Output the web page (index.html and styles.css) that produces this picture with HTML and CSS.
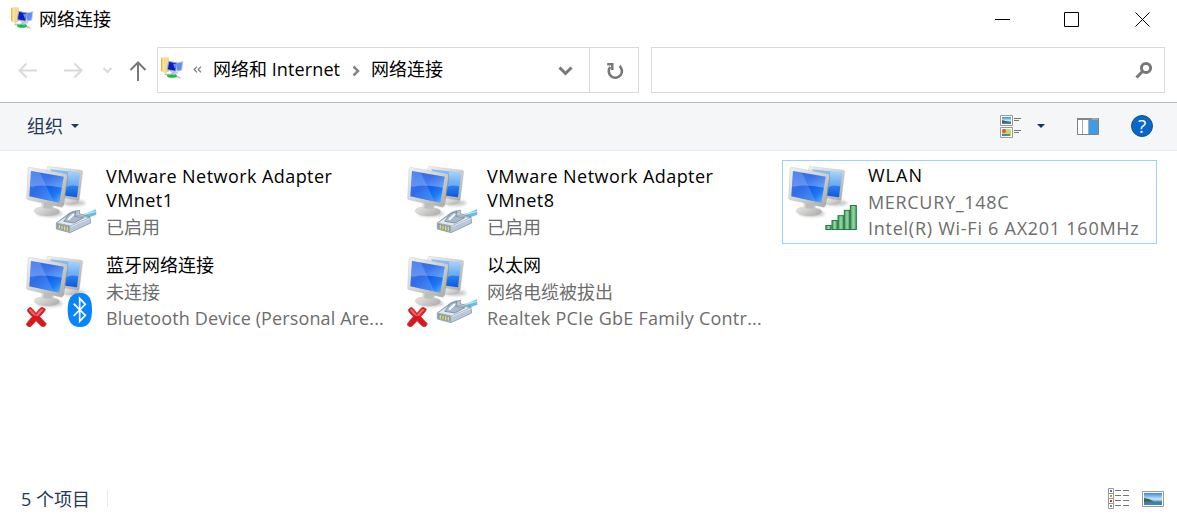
FILE: index.html
```html
<!DOCTYPE html>
<html lang="zh-CN">
<head>
<meta charset="utf-8">
<title>网络连接</title>
<link rel="stylesheet" href="styles.css">
</head>
<body>
<svg class="defs" width="0" height="0">
  <defs>
    <linearGradient id="screen" x1="0" y1="0" x2="1" y2="1">
      <stop offset="0" stop-color="#1565ee"/><stop offset=".4" stop-color="#0a50e4"/><stop offset=".75" stop-color="#1e78f4"/><stop offset="1" stop-color="#6cc0fc"/>
    </linearGradient>
    <linearGradient id="screenBack" x1="0" y1="0" x2="0" y2="1">
      <stop offset="0" stop-color="#8ecbff"/><stop offset=".45" stop-color="#3490f6"/><stop offset="1" stop-color="#0c58dc"/>
    </linearGradient>
    <linearGradient id="shine" x1="0" y1="0" x2=".5" y2="1">
      <stop offset="0" stop-color="#fff" stop-opacity=".08"/><stop offset="1" stop-color="#fff" stop-opacity=".3"/>
    </linearGradient>
    <linearGradient id="metal" x1="0" y1="0" x2="1" y2="1">
      <stop offset="0" stop-color="#f2f2f0"/><stop offset=".5" stop-color="#d2d2d0"/><stop offset="1" stop-color="#a6a6a4"/>
    </linearGradient>
    <linearGradient id="bar" x1="0" y1="0" x2="1" y2="0">
      <stop offset="0" stop-color="#3f9a5e"/><stop offset=".5" stop-color="#9bd6a8"/><stop offset="1" stop-color="#4aa267"/>
    </linearGradient>
    <linearGradient id="folder" x1="0" y1="0" x2="1" y2="0">
      <stop offset="0" stop-color="#d9ad45"/><stop offset=".3" stop-color="#fbe9a4"/><stop offset="1" stop-color="#e3bf5a"/>
    </linearGradient>
    <linearGradient id="sky" x1="0" y1="0" x2="0" y2="1">
      <stop offset="0" stop-color="#3e86dc"/><stop offset=".5" stop-color="#c4e4fa"/><stop offset=".6" stop-color="#a5cfe4"/><stop offset=".75" stop-color="#3f8090"/><stop offset="1" stop-color="#3a87c4"/>
    </linearGradient>
    <filter id="soft" x="-30%" y="-50%" width="160%" height="200%"><feGaussianBlur stdDeviation="4"/></filter>

    <symbol id="monitors" viewBox="30 30 216 216">
      <ellipse cx="175" cy="144" rx="34" ry="9" fill="#777" opacity=".4" filter="url(#soft)"/>
      <ellipse cx="102" cy="176" rx="38" ry="9" fill="#777" opacity=".4" filter="url(#soft)"/>
      <path d="M145 132L186 128Q195 140 180 146Q163 152 141 147z" fill="url(#metal)"/>
      <path d="M95 34L197 46Q201 47 200 52L190 133Q189 137 184 136L146 130L90 48z" fill="url(#metal)" stroke="#bcbcba"/>
      <path d="M102 42L192 53L183 127L148 122z" fill="url(#screenBack)"/>
      <path d="M156 50L192 53L187 94Q168 88 153 95z" fill="#fff" opacity=".32"/>
      <path d="M77 137L113 145L112 158Q137 163 130 174Q119 184 89 183Q57 180 54 168Q56 157 77 156z" fill="url(#metal)" stroke="#c2c2c0"/>
      <path d="M83 141L110 146L107 162L82 160z" fill="#bdbdba"/>
      <path d="M41 37L149 56Q155 57 155 63L141 151Q139 157 133 156L35 134Q31 132 32 128L36 41Q37 37 41 37z" fill="url(#metal)" stroke="#b5b5b3"/>
      <path d="M45 48L143 65L130 143L40 124z" fill="url(#screen)"/>
      <path d="M45 48L72 53L112 138L40 124z" fill="#fff" opacity=".16"/>
      <path d="M45 48L143 65L138 98Q78 87 48 95L42 94z" fill="url(#shine)"/>
      <path d="M153 60L156 63L142 152L136 157" fill="none" stroke="#999997" stroke-width="2"/>
    </symbol>
    <symbol id="plug" viewBox="30 30 216 216">
      <path d="M177 181Q207 179 240 163L241 179Q223 184 207 193z" fill="#63bfdd"/>
      <path d="M190 182L240 169" stroke="#b7eafa" stroke-width="4"/>
      <path d="M121 204L158 176L172 169L191 166L190 176L222 186L224 204L162 233L121 222z" fill="#b9c8d8" stroke="#7388a0" stroke-width="2"/>
      <path d="M121 204L160 178L222 188L164 213z" fill="#dfe9f2" stroke="#8397ad" stroke-width="2"/>
      <path d="M143 199L160 176L180 169L176 184L203 188L174 204z" fill="#a9b9cc" stroke="#66798f" stroke-width="2"/>
      <path d="M156 194L174 177" stroke="#f5fafe" stroke-width="6"/>
      <path d="M124 207L160 215L160 229L124 220z" fill="#929c91" stroke="#657b90"/>
      <path d="M130 210v11M138 212v11M146 214v11M154 216v11" stroke="#e3da70" stroke-width="4"/>
      <path d="M164 215L223 190" stroke="#f4f8fb" stroke-width="2"/>
    </symbol>
    <symbol id="cross" viewBox="30 30 216 216">
      <path d="M34 194L42 187Q46 186 60 205Q73 186 79 187L88 192Q90 196 71 215L91 236Q89 244 81 246Q74 243 60 227Q45 247 39 246L31 240Q29 236 49 215Q33 200 34 194z" fill="#dc171c" stroke="#b9343a" stroke-width="2"/>
      <path d="M38 194L43 191Q48 195 60 210Q73 192 79 191L83 194L66 213Q54 213 49 208z" fill="#f58080" opacity=".75"/>
    </symbol>
    <symbol id="bluetooth" viewBox="30 30 216 216">
      <path d="M192 144C219 144 228 161 228 195S218 246 192 246S155 229 155 195S166 144 192 144z" fill="#0a84fa"/>
      <path d="M173 176L208 211L191 229V160L208 178L173 213" fill="none" stroke="#fff" stroke-width="5"/>
    </symbol>
    <symbol id="signal" viewBox="30 30 216 216">
      <g fill="url(#bar)" stroke="#257b43" stroke-width="3">
        <rect x="143.500" y="211.500" width="16" height="12"/><rect x="162" y="196.500" width="16" height="27"/><rect x="180" y="182" width="17" height="41.500"/><rect x="199" y="166" width="16" height="57.500"/><rect x="217" y="151.500" width="18" height="72"/>
      </g>
    </symbol>
    <symbol id="folderNet" viewBox="0 0 72 72">
      <path d="M3 3L11 0L26 3V43L15 49L3 42z" fill="url(#folder)"/>
      <path d="M11 5L27 1V38L15 47z" fill="#f4dc8c"/>
      <path d="M47 18L69 14L65 40L51 43z" fill="#5f90ec" stroke="#c6cfdd" stroke-width="3"/>
      <path d="M26 13L51 18L47 43L22 38z" fill="#0b1fc0" stroke="#9aabd8" stroke-width="3"/>
      <path d="M39 20L49 20L46 38z" fill="#6b8cf4"/>
      <path d="M30 42L51 44L56 49L38 51z" fill="#bfc3cb"/>
      <path d="M13 52L31 53M47 58L61 63" stroke="#bcc3c9" stroke-width="5"/>
      <ellipse cx="36" cy="56" rx="15" ry="6" fill="#1fb655"/>
      <path d="M25 54Q35 48 45 54" fill="none" stroke="#7be69d" stroke-width="3"/>
    </symbol>
  </defs>
</svg>

<div class="window">
  <header class="titlebar">
    <svg class="app-icon" width="24" height="24"><use href="#folderNet"/></svg>
    <span class="title">网络连接</span>
    <svg class="controls" width="157" height="16" viewBox="0 0 157 16" fill="none" stroke="#000">
      <path d="M0 7.500h15M69.500.500h14v14h-14zM140.500.500l14 14M154.500.500l-14 14"/>
    </svg>
  </header>

  <nav class="navbar">
    <svg class="nav-arrows" width="132" height="24" viewBox="0 0 132 24" fill="none" stroke-width="2">
      <path d="M20 12.500H3M9.500 5.500L2.500 12.500L9.500 19.500M47 12.500H64M57.500 5.500L64.500 12.500L57.500 19.500" stroke="#dadada"/>
      <path d="M86.500 10l4 4 4-4" stroke="#dadada"/>
      <path d="M121 23V5M113.500 12L121 4.500L128.500 12" stroke="#777"/>
    </svg>
    <div class="address">
      <svg class="addr-icon" width="24" height="24"><use href="#folderNet"/></svg>
      <svg class="laquo" width="9" height="7" viewBox="0 0 9 7" fill="none" stroke="#777" stroke-width="1.200"><path d="M4 .7L1.200 3.500L4 6.300M8 .7L5.200 3.500L8 6.300"/></svg>
      <span class="crumb crumb-net">网络和 <span class="latin">Internet</span></span>
      <svg class="crumb-sep" width="8" height="12" viewBox="0 0 8 12" fill="none" stroke="#858585" stroke-width="2.500"><path d="M1.500 1.500L6 6L1.500 10.500"/></svg>
      <span class="crumb">网络连接</span>
      <svg class="addr-chevron" width="15" height="10" viewBox="0 0 15 10" fill="none" stroke="#777" stroke-width="3"><path d="M1.500 1.500L7.500 7.500L13.500 1.500"/></svg>
      <div class="refresh">
        <svg width="18" height="18" viewBox="0 0 18 18" fill="none" stroke="#777" stroke-width="2.600"><path d="M4.200 5A6.600 6.600 0 1 0 13.500 4"/><path d="M1.200 2.300H7.500M6.300 1.200V8" stroke-width="2.400"/></svg>
      </div>
    </div>
    <div class="search">
      <svg width="18" height="18" viewBox="0 0 18 18" fill="none" stroke="#777" stroke-width="3"><circle cx="11" cy="7" r="4.600"/><path d="M7.700 10.300L1.500 16.500"/></svg>
    </div>
  </nav>

  <div class="toolbar">
    <span class="organize">组织</span>
    <svg class="caret" width="8" height="4" viewBox="0 0 8 4"><path d="M0 0h8L4 4z" fill="#1e395b"/></svg>
    <svg class="tool-view" width="22" height="24" viewBox="0 0 22 24">
      <g fill="#fff" stroke="#999"><path d="M.500.500h12v10H.500zM.500 12.500h12v10H.500z"/></g>
      <path d="M2 2h9v7H2z" fill="url(#sky)"/><path d="M2 5l9 2.500H2z" fill="#38674a"/>
      <path d="M2 14h9v7H2z" fill="#b8d98c"/><circle cx="4" cy="16" r="2" fill="#df5a25"/><circle cx="8.500" cy="17" r="1.700" fill="#f2c943"/><path d="M2 19h4v2H2z" fill="#3e83c7"/><path d="M6 19h4v2H6z" fill="#5a9d3d"/>
      <path d="M14 3.500h7M14 5.500h5M14 15.500h7M14 17.500h5" stroke="#777"/>
    </svg>
    <svg class="caret caret-view" width="8" height="4" viewBox="0 0 8 4"><path d="M0 0h8L4 4z" fill="#16305f"/></svg>
    <svg class="tool-pane" width="22" height="17" viewBox="0 0 22 17">
      <path d="M.500.500h21v16H.500z" fill="#fff" stroke="#808080"/><path d="M0 0h22v2H0z" fill="#808786"/><path d="M15.500 1h1M17.500 1h1M19.500 1h1" stroke="#fff"/>
      <path d="M5.500 2v14" stroke="#aaa"/><path d="M12 2h9v14h-9z" fill="#409be2"/><path d="M11.500 2v14" stroke="#8fb5da"/>
    </svg>
    <span class="help">?</span>
  </div>

  <main class="items">
    <div class="item wrapped">
      <svg class="item-icon" width="72" height="72"><use href="#monitors"/><use href="#plug"/></svg>
      <div class="text"><div class="name">VMware Network Adapter<br>VMnet1</div><div class="sub">已启用</div></div>
    </div>
    <div class="item wrapped">
      <svg class="item-icon" width="72" height="72"><use href="#monitors"/><use href="#plug"/></svg>
      <div class="text"><div class="name">VMware Network Adapter<br>VMnet8</div><div class="sub">已启用</div></div>
    </div>
    <div class="item selected">
      <svg class="item-icon" width="72" height="72"><use href="#monitors"/><use href="#signal"/></svg>
      <div class="text"><div class="name wlan">WLAN</div><div class="sub mercury">MERCURY_148C</div><div class="sub intel">Intel(R) Wi-Fi 6 AX201 160MHz</div></div>
    </div>
    <div class="item">
      <svg class="item-icon" width="72" height="72"><use href="#monitors"/><use href="#cross"/><use href="#bluetooth"/></svg>
      <div class="text"><div class="name">蓝牙网络连接</div><div class="sub">未连接</div><div class="sub bt">Bluetooth Device (Personal Are...</div></div>
    </div>
    <div class="item">
      <svg class="item-icon" width="72" height="72"><use href="#monitors"/><use href="#cross"/><use href="#plug"/></svg>
      <div class="text"><div class="name">以太网</div><div class="sub">网络电缆被拔出</div><div class="sub realtek">Realtek PCIe GbE Family Contr...</div></div>
    </div>
  </main>

  <footer class="status">
    <span class="count">5 个项目</span>
    <span class="divider"></span>
    <svg class="view-details" width="22" height="21" viewBox="0 0 22 21">
      <path d="M.500.500h5v20h-5zM.500 5.500h5M.500 10.500h5M.500 15.500h5" fill="#fff" stroke="#999"/>
      <path d="M2 2h2v2H2z" fill="#397eb6"/><path d="M2 7h2v2H2z" fill="#b59a36"/><path d="M2 12h2v2H2z" fill="#cb392a"/><path d="M2 17h2v2H2z" fill="#6c95ad"/>
      <path d="M7 2.500h6M15 2.500h6M7 7.500h6M15 7.500h6M7 12.500h6M15 12.500h6M7 17.500h6M15 17.500h6" stroke="#777"/>
    </svg>
    <svg class="view-large" width="22" height="16" viewBox="0 0 22 16">
      <path d="M.500.500h21v15H.500z" fill="#fff" stroke="#999"/><path d="M2 2h18v12H2z" fill="url(#sky)"/><path d="M2 7q5 0 10 3.500L2 11z" fill="#38674a"/>
    </svg>
  </footer>
</div>
</body>
</html>
```

FILE: styles.css
```css
* { box-sizing: border-box; }
body {
  margin: 0;
  background: #fff;
  color: #000;
  font: 18px/24px "Open Sans", "Noto Sans CJK SC", sans-serif;
}
svg { display: block; flex: none; }
.defs { position: absolute; }
.window { display: flex; flex-direction: column; width: 1177px; height: 516px; overflow: hidden; white-space: nowrap; }

.titlebar { display: flex; align-items: center; height: 39px; padding: 0 25px 0 10px; }
.app-icon { margin-top: -2px; }
.title { margin-left: 5px; padding-bottom: 2px; }
.controls { margin-left: auto; }

.navbar { display: flex; height: 63px; padding: 8px 12px 9px 17px; }
.nav-arrows { margin-top: 11px; }
.address { display: flex; align-items: center; width: 482px; margin-left: 8px; border: 1px solid #d9d9d9; padding-left: 2px; }
.addr-icon { margin-top: -2px; }
.laquo { margin: 0 11px 1px 9px; }
.crumb { padding-bottom: 2px; }
.crumb-sep { margin: 1px 11px 0; }
.crumb-net { width: 128px; }
.latin { letter-spacing: .12px; }
.addr-chevron { margin: 2px 16px 0 auto; }
.refresh { display: flex; align-items: center; justify-content: center; align-self: stretch; width: 49px; padding: 2px 0 0 2px; border-left: 1px solid #d9d9d9; }
.search { display: flex; align-items: center; justify-content: flex-end; width: 514px; margin-left: 12px; padding-right: 11px; border: 1px solid #d9d9d9; }

.toolbar { display: flex; align-items: center; height: 49px; padding: 0 24px 0 27px; background: #f5f6f7; border-top: 1px solid #b9bcbf; border-bottom: 1px solid #e8ebee; color: #1e395b; }
.organize { padding-bottom: 2px; }
.caret { margin: 0 0 1px 8px; }
.tool-view { margin-left: auto; }
.caret-view { margin-left: 15px; }
.tool-pane { margin-left: 32px; }
.help { width: 22px; height: 22px; margin: 0 0 1px 32px; border: 1px solid #124f91; border-radius: 50%; background: #0868c9; color: #fff; font-size: 19px; line-height: 20px; text-align: center; }

.items { display: grid; grid-template-columns: repeat(3, 375px); grid-auto-rows: 84px; gap: 6px; height: 332px; padding: 9px 0 0 20px; }
.item { display: flex; border: 1px solid transparent; padding: 4px 0 0 5px; }
.selected { border-color: #99d1ff; }
.text { margin: -3px 0 0 8px; line-height: 26.500px; }
.wrapped .name { margin-top: 2px; line-height: 24px; letter-spacing: .44px; }
.wrapped .sub { margin-top: 2px; }
.wlan { letter-spacing: 1px; }
.sub { color: #6d6d6d; }
.mercury { letter-spacing: .68px; }
.intel { letter-spacing: .74px; }
.bt { letter-spacing: .12px; }
.realtek { letter-spacing: .25px; }

.status { display: flex; align-items: center; height: 31px; padding: 0 13px 0 21px; color: #1e395b; }
.divider { width: 1px; height: 17px; margin-left: 17px; background: #e8e8e8; }
.view-details { margin-left: auto; }
.view-large { margin-left: 12px; }
```
